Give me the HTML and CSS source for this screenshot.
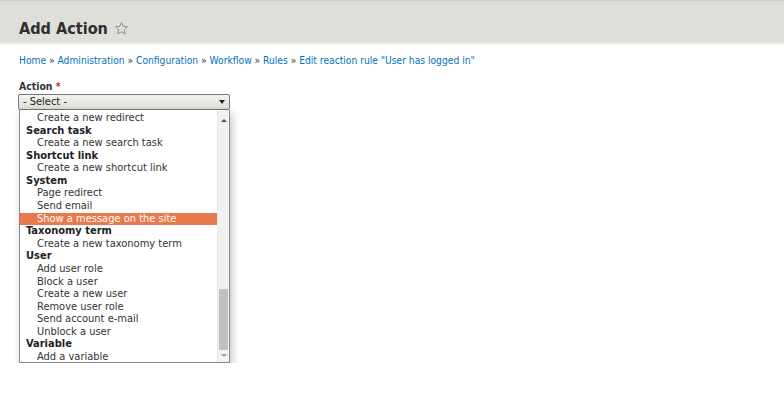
FILE: index.html
```html
<!DOCTYPE html>
<html lang="en">
<head>
    <meta charset="UTF-8">
    <title>Add Action</title>
    <link rel="stylesheet" href="styles.css">
</head>
<body>
    <div class="page-header">
        <h1>Add Action
            <svg class="star" width="15" height="15" viewBox="0 0 24 24">
                <path d="M12 2.5l2.9 6.1 6.6.8-4.9 4.6 1.3 6.6L12 17.3l-5.9 3.3 1.3-6.6-4.9-4.6 6.6-.8z" fill="none" stroke="#8f8f87" stroke-width="1.6" stroke-linejoin="round"/>
            </svg>
        </h1>
    </div>

    <div class="content">
        <div class="breadcrumb">
            <a href="#">Home</a> » <a href="#">Administration</a> » <a href="#">Configuration</a> » <a href="#">Workflow</a> » <a href="#">Rules</a> » <a href="#">Edit reaction rule "User has logged in"</a>
        </div>

        <div class="form-item">
            <label>Action <span class="required">*</span></label>
            <div class="select">
                <span>- Select -</span>
                <span class="arrow"></span>
            </div>
            <div class="dropdown">
                <ul class="options">
                    <li class="opt">Create a new redirect</li>
                    <li class="group">Search task</li>
                    <li class="opt">Create a new search task</li>
                    <li class="group">Shortcut link</li>
                    <li class="opt">Create a new shortcut link</li>
                    <li class="group">System</li>
                    <li class="opt">Page redirect</li>
                    <li class="opt">Send email</li>
                    <li class="opt selected">Show a message on the site</li>
                    <li class="group">Taxonomy term</li>
                    <li class="opt">Create a new taxonomy term</li>
                    <li class="group">User</li>
                    <li class="opt">Add user role</li>
                    <li class="opt">Block a user</li>
                    <li class="opt">Create a new user</li>
                    <li class="opt">Remove user role</li>
                    <li class="opt">Send account e-mail</li>
                    <li class="opt">Unblock a user</li>
                    <li class="group">Variable</li>
                    <li class="opt">Add a variable</li>
                </ul>
                <div class="scrollbar">
                    <span class="up"></span>
                    <div class="track"><div class="thumb"></div></div>
                    <span class="down"></span>
                </div>
            </div>
        </div>
    </div>
</body>
</html>
```

FILE: styles.css
```css
body {
    margin: 0;
    font-family: "DejaVu Sans Condensed", "DejaVu Sans", sans-serif;
    font-size: 11px;
    color: #333;
    background: #fff;
}
.page-header {
    background-color: #dfded8;
    border-top: 1px solid #d0cfc8;
    border-bottom: 2px solid #ebeae6;
    height: 41px;
    padding-left: 19px;
}
.page-header h1 {
    margin: 0;
    padding-top: 17px;
    font-size: 16.1px;
    line-height: 21px;
    font-weight: bold;
    color: #2f2f2f;
    display: flex;
    align-items: center;
    gap: 6px;
}
.star {
    margin-top: -1px;
}
.content {
    padding-left: 19px;
}
.breadcrumb {
    margin-top: 10px;
    line-height: 14px;
    font-size: 10.2px;
    color: #333;
}
.breadcrumb a {
    color: #0074bd;
    text-decoration: none;
}
.form-item {
    margin-top: 11px;
}
.form-item label {
    display: block;
    font-weight: bold;
    font-size: 10.4px;
    line-height: 14px;
}
.required {
    color: #e0302a;
}
.select {
    margin-top: 1px;
    width: 206px;
    height: 14px;
    margin-left: -1px;
    border: 1px solid #777;
    border-radius: 2px;
    background: linear-gradient(#f4f4ee, #dfdfd6);
    padding: 0 0 0 4px;
    display: flex;
    justify-content: space-between;
    align-items: center;
    line-height: 14px;
    color: #222;
}
.arrow {
    width: 0;
    height: 0;
    margin-right: 4px;
    border-left: 3px solid transparent;
    border-right: 3px solid transparent;
    border-top: 4px solid #222;
}
.dropdown {
    width: 209px;
    height: 252px;
    border: 1px solid #8a8a8a;
    border-top: none;
    background: #fff;
    display: flex;
    box-shadow: 2px 3px 8px rgba(0, 0, 0, 0.25);
    overflow: hidden;
}
.options {
    list-style: none;
    margin: 0;
    padding: 2px 0 0 0;
    flex: 1;
}
.options li {
    height: 12.58px;
    line-height: 12.58px;
    white-space: nowrap;
    color: #333;
}
.options .group {
    font-weight: bold;
    padding-left: 6px;
    color: #222;
}
.options .opt {
    padding-left: 17px;
}
.options .selected {
    background-color: #e8794c;
    color: #fff;
}
.scrollbar {
    width: 11px;
    background: #f1f1f1;
    border-left: 1px solid #e6e6e6;
    display: flex;
    flex-direction: column;
    align-items: center;
}
.scrollbar .up,
.scrollbar .down {
    width: 0;
    height: 0;
    border-left: 3px solid transparent;
    border-right: 3px solid transparent;
}
.scrollbar .up {
    margin-top: 9px;
    border-bottom: 3px solid #505050;
}
.scrollbar .down {
    margin: 4px 0 5px;
    border-top: 3px solid #a3a3a3;
}
.track {
    flex: 1;
    width: 100%;
    display: flex;
    flex-direction: column;
    justify-content: flex-end;
}
.thumb {
    height: 61px;
    margin: 0 1px;
    background: #c1c1c1;
}
```
